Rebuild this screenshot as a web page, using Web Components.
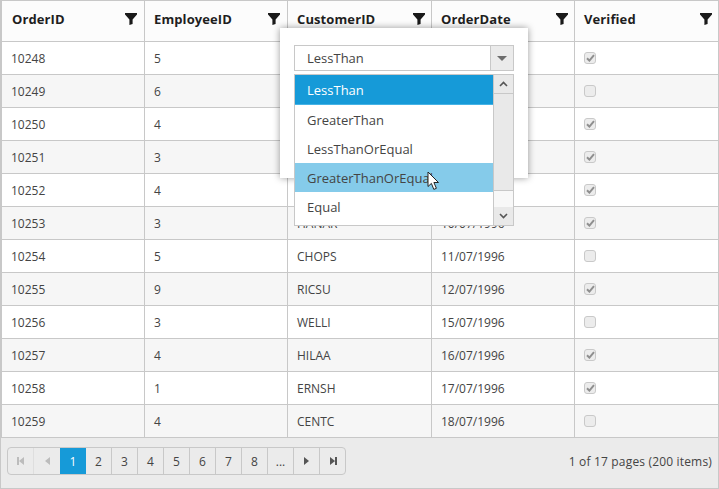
<!DOCTYPE html>
<html>
<head>
<meta charset="utf-8">
<title>Grid filter</title>
<style>
body { margin: 0; background: #fff; font-family: "Open Sans", "Noto Sans", sans-serif; }
</style>
</head>
<body>
<order-grid></order-grid>
<script>
// the cells the popup covers completely stay empty, the reference shows nothing there
const orders = [
  ['10248', '5', '', '', true],
  ['10249', '6', '', '', false],
  ['10250', '4', '', '', true],
  ['10251', '3', '', '', true],
  ['10252', '4', '', '', true],
  ['10253', '3', 'HANAR', '10/07/1996', true],
  ['10254', '5', 'CHOPS', '11/07/1996', false],
  ['10255', '9', 'RICSU', '12/07/1996', true],
  ['10256', '3', 'WELLI', '15/07/1996', false],
  ['10257', '4', 'HILAA', '16/07/1996', true],
  ['10258', '1', 'ERNSH', '17/07/1996', true],
  ['10259', '4', 'CENTC', '18/07/1996', false]
]
const columns = 'grid-template-columns: 143px 143px 144px 143px 144px;'

class GridHeader extends HTMLElement {
  constructor() {
    super()
    const root = this.attachShadow({ mode: 'open' })
    const names = ['OrderID', 'EmployeeID', 'CustomerID', 'OrderDate', 'Verified']
    root.innerHTML = `
    <style>
    :host{ display:grid; ${columns} height:40px; background:#fcfcfc; border-bottom:1px solid #c8c8c8; }
    .cell{ display:flex; align-items:center; justify-content:space-between; padding:0 6px 4px 9px; border-left:1px solid #c8c8c8; font-size:13px; font-weight:700; color:#1f1f1f; letter-spacing:.1px; }
    .cell:first-child{ border-left:0; padding-left:9px; padding-right:7px; }
    .cell:nth-child(2){ padding-left:10px; padding-right:7px; }
    .cell:nth-child(3){ padding-right:7px; }
    svg{ display:block; }
    </style>
    ${names.map(n => `<div class="cell"><span>${n}</span>
      <svg width="12" height="12" viewBox="0 0 12 12"><path d="M0 0H12V1.5L7.6 6.5V11L4.4 12V6.5L0 1.5Z" fill="#1a1a1a"/></svg></div>`).join('')}
    `
  }
}
customElements.define('grid-header', GridHeader)

class GridRow extends HTMLElement {
  constructor() {
    super()
    this.attachShadow({ mode: 'open' })
  }
  connectedCallback() {
    const d = orders[this.getAttribute('index')]
    const mark = d[4] ? '<svg width="9" height="8" viewBox="0 0 9 8"><path d="M1 4.2L3.4 6.6L8 1.2" fill="none" stroke="#8f8f8f" stroke-width="2"/></svg>' : ''
    this.shadowRoot.innerHTML = `
    <style>
    :host{ display:grid; ${columns} height:32px; border-bottom:1px solid #c8c8c8; font-size:12px; color:#444; }
    :host(:nth-child(even)){ background:#f6f6f6; }
    .cell{ display:flex; align-items:center; padding:0 10px 0 9px; border-left:1px solid #c8c8c8; }
    .cell:first-child{ border-left:0; }
    .box{ width:10px; height:10px; border:1px solid #c9c9c9; border-radius:3px; background:#ececec; display:flex; align-items:center; justify-content:center; }
    </style>
    <div class="cell">${d[0]}</div><div class="cell">${d[1]}</div><div class="cell">${d[2]}</div><div class="cell">${d[3]}</div>
    <div class="cell"><span class="box">${mark}</span></div>
    `
  }
}
customElements.define('grid-row', GridRow)

class GridPager extends HTMLElement {
  constructor() {
    super()
    const root = this.attachShadow({ mode: 'open' })
    const nums = ['1', '2', '3', '4', '5', '6', '7', '8', '...']
    root.innerHTML = `
    <style>
    :host{ display:flex; align-items:center; justify-content:space-between; height:50px; padding:0 6px 0 6px; background:#ebebeb; border-bottom:1px solid #c8c8c8; font-size:12px; color:#444; }
    .pages{ display:flex; height:26px; border:1px solid #c8c8c8; border-radius:4px; margin-bottom:4px; }
    .pages span{ width:25px; display:flex; align-items:center; justify-content:center; border-left:1px solid #c8c8c8; }
    .pages span:first-child{ border-left:0; width:25px; }
    .pages .off{ border-left-color:#dedede; }
    .pages .off + .off{ width:26px; }
    .pages .on{ background:#169ad8; color:#fff; border-left:0; width:26px; }
    .pages .on + span{ border-left:0; }
    .info{ margin-bottom:3px; letter-spacing:.17px; }
    </style>
    <div class="pages">
      <span class="off"><svg width="8" height="8" viewBox="0 0 8 8"><path d="M0 0H2V8H0ZM2 4L7 0V8Z" fill="#bcbcbc"/></svg></span>
      <span class="off"><svg width="5" height="8" viewBox="0 0 5 8"><path d="M5 0V8L0 4Z" fill="#bcbcbc"/></svg></span>
      ${nums.map((n, i) => `<span class="${i == 0 ? 'on' : ''}">${n}</span>`).join('')}
      <span><svg width="5" height="8" viewBox="0 0 5 8"><path d="M0 0V8L5 4Z" fill="#555"/></svg></span>
      <span><svg width="8" height="8" viewBox="0 0 8 8"><path d="M6 0H8V8H6ZM6 4L1 0V8Z" fill="#555"/></svg></span>
    </div>
    <div class="info">1 of 17 pages (200 items)</div>
    `
  }
}
customElements.define('grid-pager', GridPager)

class FilterPopup extends HTMLElement {
  constructor() {
    super()
    const root = this.attachShadow({ mode: 'open' })
    root.innerHTML = `
    <style>
    :host{ position:absolute; left:279px; top:27px; width:248px; height:150px; background:#fff; box-shadow:0 0 7px rgba(0,0,0,.4); font-size:13px; color:#444; }
    .input{ position:absolute; left:14px; top:17px; width:218px; height:24px; border:1px solid #c8c8c8; display:flex; }
    .input .val{ flex:1; padding:0 0 1px 12px; display:flex; align-items:center; }
    .input .btn{ width:22px; background:#ebebeb; border-left:1px solid #c8c8c8; display:flex; align-items:center; justify-content:center; }
    .list{ position:absolute; left:14px; top:46px; width:218px; height:150px; background:#fff; border:1px solid #c8c8c8; display:flex; }
    .items{ width:198px; }
    .items div{ height:29px; display:flex; align-items:center; padding-left:12px; white-space:nowrap; }
    .items .sel{ background:#169ad8; color:#fff; border-bottom:1px solid #46b3e6; }
    .items .hover{ background:#85cbea; }
    .bar{ width:19px; border-left:1px solid #c8c8c8; display:flex; flex-direction:column; background:#e9e9e9; }
    .bar .arrow{ height:18px; display:flex; align-items:center; justify-content:center; }
    .bar .up{ border-bottom:1px solid #c8c8c8; }
    .bar .track{ flex:1; }
    .bar .rest{ height:16px; background:#f8f8f8; border-top:1px solid #c8c8c8; }
    .cursor{ position:absolute; left:147px; top:143px; }
    </style>
    <div class="input"><div class="val">LessThan</div><div class="btn"><svg width="10" height="5" viewBox="0 0 10 5"><path d="M0 0H10L5 5Z" fill="#6d6d6d"/></svg></div></div>
    <div class="list">
      <div class="items">
        <div class="sel">LessThan</div>
        <div>GreaterThan</div>
        <div>LessThanOrEqual</div>
        <div class="hover">GreaterThanOrEqual</div>
        <div>Equal</div>
      </div>
      <div class="bar">
        <div class="arrow up"><svg width="9" height="6" viewBox="0 0 9 6"><path d="M1 5L4.5 1.5L8 5" fill="none" stroke="#555" stroke-width="1.6"/></svg></div>
        <div class="track"></div>
        <div class="rest"></div>
        <div class="arrow"><svg width="9" height="6" viewBox="0 0 9 6"><path d="M1 1L4.5 4.5L8 1" fill="none" stroke="#555" stroke-width="1.6"/></svg></div>
      </div>
    </div>
    <svg class="cursor" width="14" height="20" viewBox="0 0 14 20"><path d="M1 1V15.5L4.4 12.4L6.8 18.4L9.4 17.3L6.9 11.5H11.5Z" fill="#fff" stroke="#222" stroke-width="1"/></svg>
    `
  }
}
customElements.define('filter-popup', FilterPopup)

class OrderGrid extends HTMLElement {
  constructor() {
    super()
    const root = this.attachShadow({ mode: 'open' })
    root.innerHTML = `
    <style>
    :host{ display:block; position:relative; box-sizing:border-box; width:719px; height:489px; border:1px solid #c8c8c8; border-bottom:0; }
    </style>
    <grid-header></grid-header>
    <div id="rows">${orders.map((o, i) => `<grid-row index="${i}"></grid-row>`).join('')}</div>
    <grid-pager></grid-pager>
    <filter-popup></filter-popup>
    `
  }
}
customElements.define('order-grid', OrderGrid)
</script>
</body>
</html>
